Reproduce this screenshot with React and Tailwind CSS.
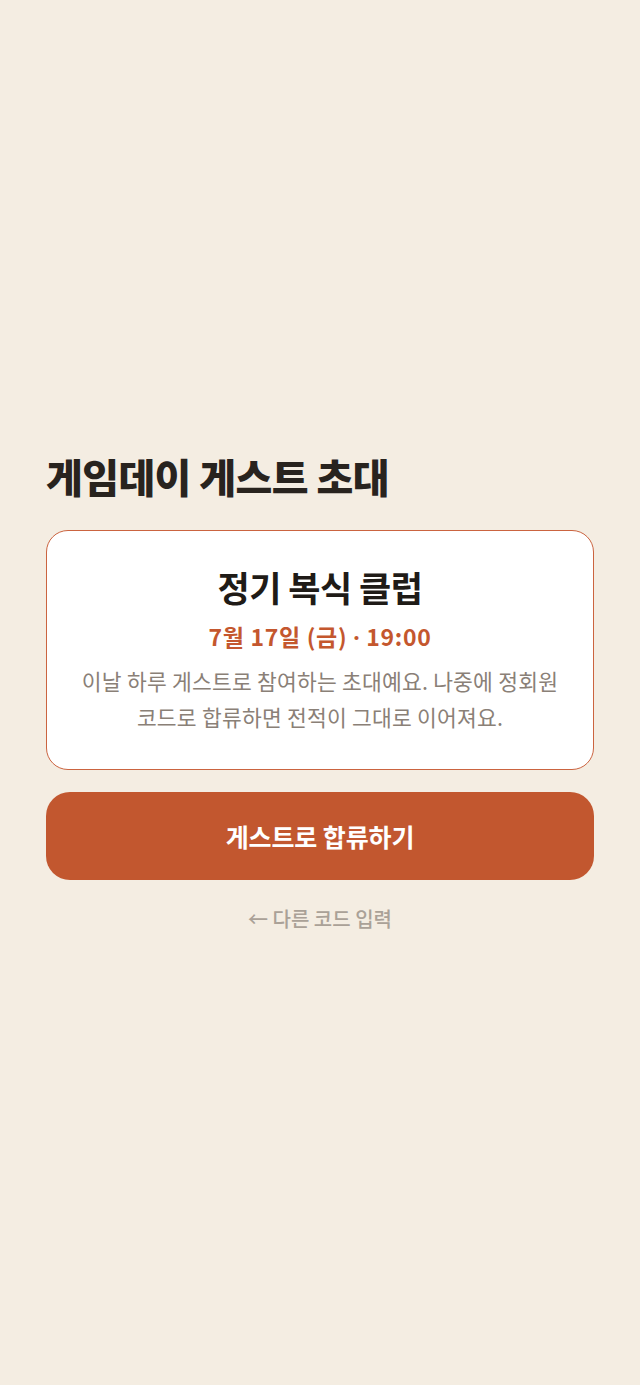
export default function App() {
  return (
    <div
      className="min-h-screen bg-[#f4ede2] flex flex-col justify-center px-[46px]"
      style={{ fontFamily: '"Noto Sans CJK KR", "Noto Sans", sans-serif' }}
    >
      <h1 className="text-[40px] font-extrabold text-[#28231e] tracking-[-0.015em] leading-tight">
        게임데이 게스트 초대
      </h1>

      <div className="mt-[29px] bg-white border-[1.5px] border-[#cb6440] rounded-[22px] px-4 pt-[34px] pb-[34px] text-center">
        <h2 className="text-[35px] font-bold text-[#1f1b17] tracking-[-0.015em] leading-tight">정기 복식 클럽</h2>
        <p className="mt-[13px] text-[23px] font-bold text-[#c4572e] tracking-[0.03em] leading-tight">
          7월 17일 (금) <span className="font-['Noto_Sans',sans-serif]">·</span> 19:00
        </p>
        <p className="mt-[12px] text-[21.5px] text-[#8a8077] leading-[36px] tracking-[0.01em]">
          이날 하루 게스트로 참여하는 초대예요. 나중에 정회원
          <br />
          코드로 합류하면 전적이 그대로 이어져요.
        </p>
      </div>

      <button className="mt-[22px] h-[88px] w-full rounded-[24px] bg-[#c2572f] text-white text-[25px] font-bold tracking-[-0.005em]">
        게스트로 합류하기
      </button>

      <button className="mt-[24px] self-center text-[20px] font-medium text-[#aaa197]">
        ← 다른 코드 입력
      </button>
    </div>
  );
}
